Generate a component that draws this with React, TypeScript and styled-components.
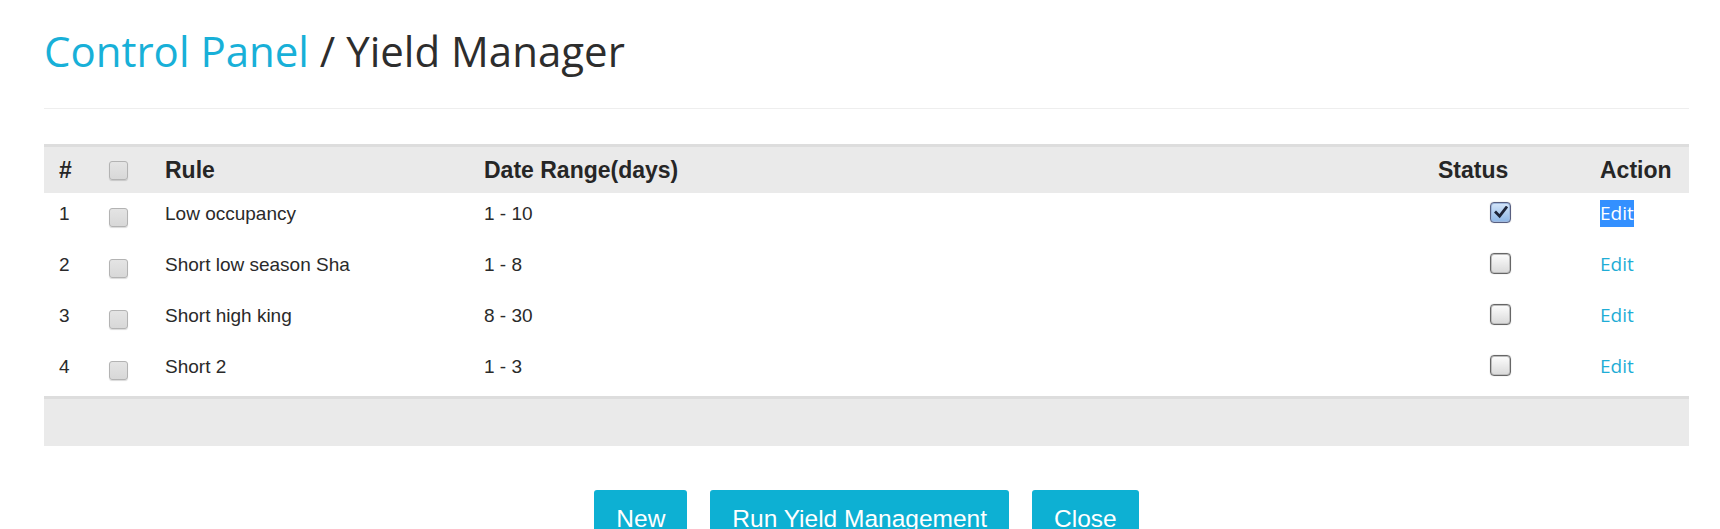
import React from "react";
import styled, { createGlobalStyle } from "styled-components";

const GlobalStyle = createGlobalStyle`
  html, body { margin: 0; padding: 0; background: #ffffff; }
  body { font-family: "Liberation Sans", Arial, sans-serif; color: #333333; }
`;

const Page = styled.div`
  padding: 0 31px 0 44px;
  box-sizing: border-box;
  width: 1720px;
`;

const Title = styled.h1`
  margin: 28px 0 0 0;
  font-family: "Open Sans", sans-serif;
  font-weight: 400;
  font-size: 42px;
  line-height: 46px;
  color: #2d2d2d;
`;

const Crumb = styled.span`
  color: #18b0d8;
`;

const Rule = styled.hr`
  margin: 34px 0 35px 0;
  border: 0;
  border-top: 1px solid #eeeeee;
  height: 0;
`;

const Table = styled.table`
  width: 100%;
  border-collapse: collapse;
  table-layout: fixed;
`;

const HeadRow = styled.tr`
  background: #eaeaea;
  border-top: 3px solid #dddddd;
`;

const HeadCell = styled.th`
  text-align: left;
  padding: 10px 15px 9px 15px;
  font-size: 23px;
  line-height: 27px;
  font-weight: 700;
  color: #262626;
  vertical-align: top;
`;

const BodyRow = styled.tr`
  height: 51px;
`;

const Cell = styled.td`
  padding: 7px 15px 0 15px;
  font-size: 19px;
  line-height: 27px;
  color: #2a2a2a;
  vertical-align: top;
  white-space: nowrap;
`;

const FootRow = styled.tr`
  background: #eaeaea;
  border-top: 3px solid #dddddd;
  height: 49px;
`;

const SelectBox = styled.span<{ $offset: number }>`
  display: block;
  width: 17px;
  height: 17px;
  margin-top: ${(p) => p.$offset}px;
  border: 1px solid #b3b3b3;
  border-radius: 3px;
  background: linear-gradient(#e4e4e4, #d8d8d8);
  box-shadow: 0 1px 1px rgba(0, 0, 0, 0.15);
`;

const StatusBox = styled.span<{ $checked?: boolean }>`
  display: flex;
  align-items: center;
  justify-content: center;
  width: 21px;
  height: 21px;
  margin: 2px 0 0 52px;
  box-sizing: border-box;
  border: 1px solid ${(p) => (p.$checked ? "#585f80" : "#666666")};
  border-radius: 4px;
  box-shadow: inset 0 0 0 1px ${(p) => (p.$checked ? "#9fb9de" : "#bdbdbd")},
    0 0 1px rgba(0, 0, 0, 0.35);
  background: ${(p) =>
    p.$checked
      ? "linear-gradient(#d5e6f9, #8db6e7)"
      : "linear-gradient(#fdfdfd, #d9d9d9)"};
`;

const EditLink = styled.a<{ $selected?: boolean }>`
  font-family: "Open Sans", sans-serif;
  font-size: 19px;
  line-height: 27px;
  display: inline-block;
  text-decoration: none;
  color: ${(p) => (p.$selected ? "#ffffff" : "#1fadd6")};
  background: ${(p) => (p.$selected ? "#3390ff" : "transparent")};
  cursor: pointer;
`;

const Buttons = styled.div`
  display: flex;
  justify-content: center;
  gap: 23px;
  margin-top: 44px;
`;

const Button = styled.button`
  font-family: "Liberation Sans", Arial, sans-serif;
  font-size: 24.5px;
  line-height: 34px;
  padding: 12px 22px 10px 22px;
  color: #ffffff;
  background: #0db0d3;
  border: 0;
  border-radius: 3px;
  cursor: pointer;
`;

const rules = [
  { id: 1, name: "Low occupancy", range: "1 - 10", active: true },
  { id: 2, name: "Short low season Sha", range: "1 - 8", active: false },
  { id: 3, name: "Short high king", range: "8 - 30", active: false },
  { id: 4, name: "Short 2", range: "1 - 3", active: false },
];

const Check = () => (
  <svg width="14" height="13" viewBox="0 0 14 13">
    <path
      d="M2 6.6 L5.6 10.2 L12.2 1.6"
      fill="none"
      stroke="#1d2438"
      strokeWidth="2.8"
      strokeLinecap="square"
    />
  </svg>
);

export default function App() {
  return (
    <>
      <GlobalStyle />
      <Page>
        <Title>
          <Crumb>Control Panel</Crumb> / Yield Manager
        </Title>
        <Rule />
        <Table>
          <colgroup>
            <col style={{ width: 50 }} />
            <col style={{ width: 56 }} />
            <col style={{ width: 319 }} />
            <col style={{ width: 954 }} />
            <col style={{ width: 162 }} />
            <col style={{ width: 104 }} />
          </colgroup>
          <thead>
            <HeadRow>
              <HeadCell>#</HeadCell>
              <HeadCell>
                <SelectBox $offset={4} />
              </HeadCell>
              <HeadCell>Rule</HeadCell>
              <HeadCell>Date Range(days)</HeadCell>
              <HeadCell>Status</HeadCell>
              <HeadCell>Action</HeadCell>
            </HeadRow>
          </thead>
          <tbody>
            {rules.map((r) => (
              <BodyRow key={r.id}>
                <Cell>{r.id}</Cell>
                <Cell>
                  <SelectBox $offset={8} />
                </Cell>
                <Cell>{r.name}</Cell>
                <Cell>{r.range}</Cell>
                <Cell>
                  <StatusBox $checked={r.active}>{r.active && <Check />}</StatusBox>
                </Cell>
                <Cell>
                  <EditLink $selected={r.id === 1}>Edit</EditLink>
                </Cell>
              </BodyRow>
            ))}
          </tbody>
          <tfoot>
            <FootRow>
              <td colSpan={6} />
            </FootRow>
          </tfoot>
        </Table>
        <Buttons>
          <Button>New</Button>
          <Button>Run Yield Management</Button>
          <Button>Close</Button>
        </Buttons>
      </Page>
    </>
  );
}
